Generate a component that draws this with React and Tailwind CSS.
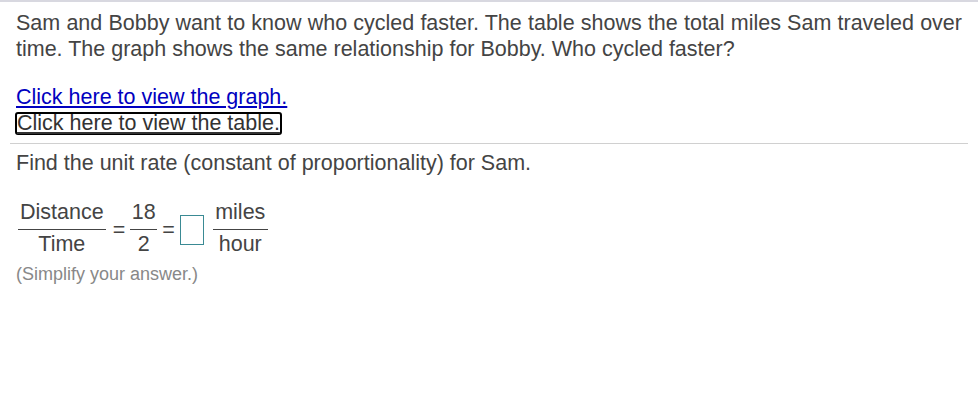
export default function App() {
  return (
    <div className="w-[978px] h-[414px] bg-white border-t-2 border-[#d8d8e0] font-['Liberation_Sans',Arial,sans-serif] text-[21.5px] text-[#444] leading-[26px]">
      <div className="px-4 pt-[8px]">
        <p className="text-justify">
          Sam and Bobby want to know who cycled faster. The table shows the total miles Sam traveled over
          time. The graph shows the same relationship for Bobby. Who cycled faster?
        </p>
        <div className="mt-[22px] flex flex-col items-start">
          <a href="#" className="text-[#0000c0] underline leading-[26px]">Click here to view the graph.</a>
          <a href="#" className="text-[#333] underline leading-[19px] mt-[2px] border-2 border-black rounded-[3px] -ml-[1px]">Click here to view the table.</a>
        </div>
      </div>
      <div className="mx-[10px] mt-[8px] border-t border-[#d0d0d0]"></div>
      <div className="px-4 pt-[6px]">
        <p>Find the unit rate (constant of proportionality) for Sam.</p>
        <div className="mt-[25px] flex items-center">
          <div className="flex flex-col items-center px-[2px]">
            <span className="px-[2px] leading-[22px]">Distance</span>
            <span className="w-full border-t border-[#444] mt-[6px]"></span>
            <span className="leading-[22px] mt-[3px]">Time</span>
          </div>
          <span className="mx-[5px] mt-[3px]">=</span>
          <div className="flex flex-col items-center">
            <span className="leading-[22px]">18</span>
            <span className="w-[27px] border-t border-[#444] mt-[6px]"></span>
            <span className="leading-[22px] mt-[3px]">2</span>
          </div>
          <span className="mx-[5px] mt-[3px]">=</span>
          <div className="w-[24px] h-[30px] border border-[#3a8a94] mt-[4px]"></div>
          <div className="flex flex-col items-center ml-[9px]">
            <span className="leading-[22px]">miles</span>
            <span className="w-[55px] border-t border-[#444] mt-[6px]"></span>
            <span className="leading-[22px] mt-[3px]">hour</span>
          </div>
        </div>
        <p className="text-[18px] text-[#888] leading-[26px] mt-[6px]">(Simplify your answer.)</p>
      </div>
    </div>
  );
}
